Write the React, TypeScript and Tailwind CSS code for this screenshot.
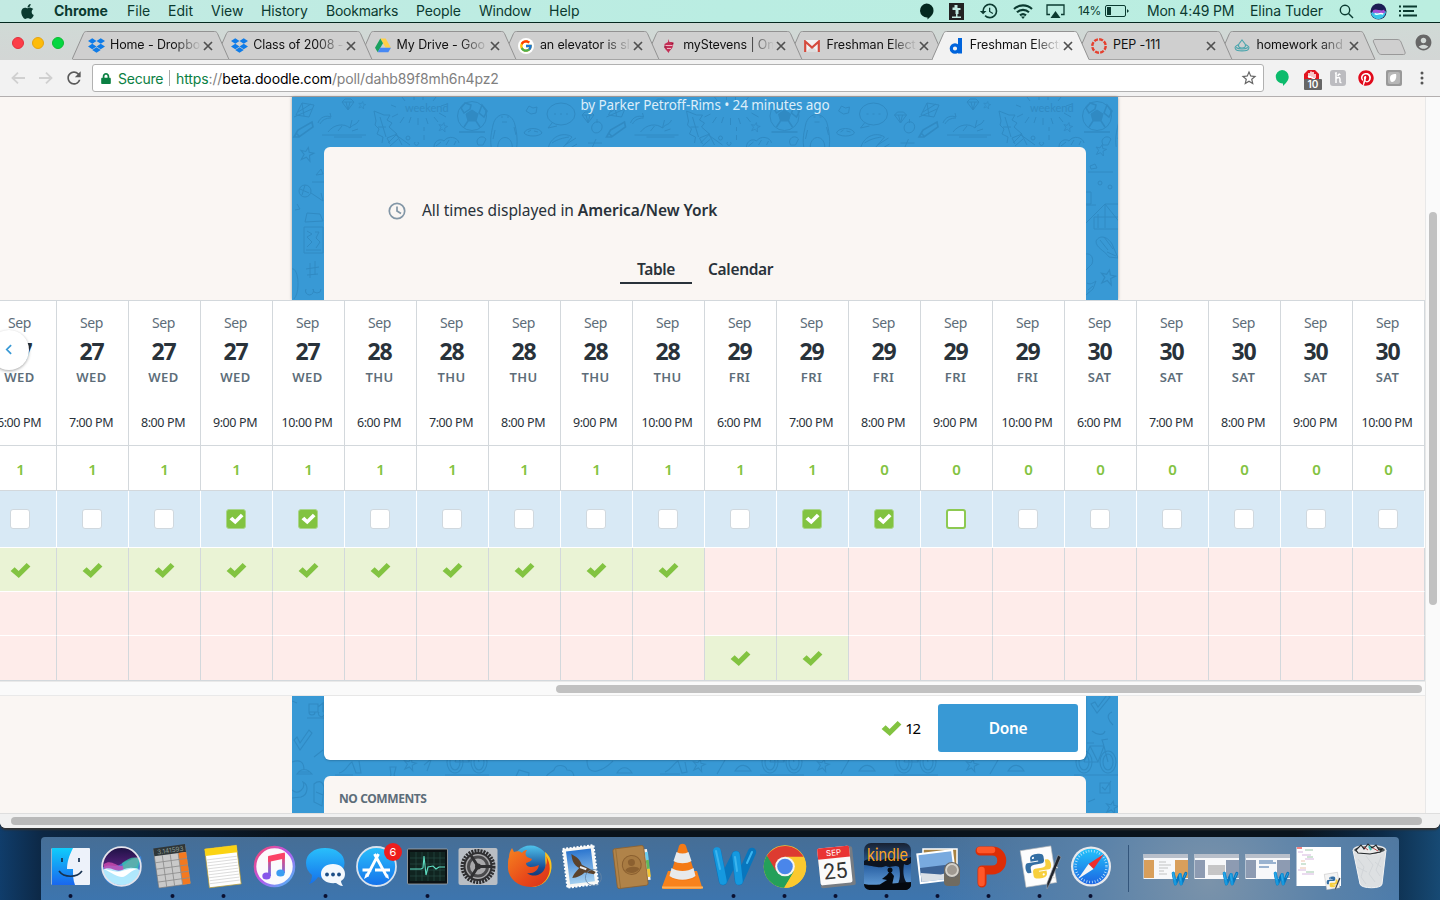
import React from "react";
import { FaApple, FaDropbox, FaPinterest, FaLock } from "react-icons/fa";
import { FcGoogle } from "react-icons/fc";
import { MdAccountCircle, MdRefresh, MdStarBorder, MdHistory } from "react-icons/md";

const CHECK = "M0.500 9.500 L4.800 5.500 L9 9.600 L17.500 1 L21.500 4.800 L9.200 17 Z";

function Check({ className }: { className: string }) {
  return (
    <svg viewBox="0 0 22 18" className={className}>
      <path d={CHECK} fill="currentColor" />
    </svg>
  );
}

/* ---------- macOS menu bar ---------- */

function MenuBar() {
  return (
    <div className="flex h-[23px] shrink-0 items-center border-b border-[#04281f] bg-gradient-to-r from-[#c3eae2] via-[#baede2] to-[#bbeee0] text-[14px] leading-[22px] whitespace-nowrap text-[#0b3a30]">
      <FaApple className="ml-5 h-[17px] w-[15px] shrink-0" />
      <span className="ml-[19px] w-[73px] font-bold tracking-[-0.05px]">Chrome</span>
      <span className="w-[41px]">File</span>
      <span className="w-[43px]">Edit</span>
      <span className="w-[50px]">View</span>
      <span className="w-[65px] tracking-[-0.1px]">History</span>
      <span className="w-[90px] tracking-[-0.25px]">Bookmarks</span>
      <span className="w-[63px] tracking-[-0.15px]">People</span>
      <span className="w-[70px] tracking-[-0.25px]">Window</span>
      <span>Help</span>
      <div className="ml-auto flex h-full items-center">
        <svg viewBox="0 0 15 17" className="h-[17px] w-[15px]">
          <path d="M7.500 .5a7 7 0 0 1 7 7c0 4-3 6.500-6 9v-2a7 7 0 1 1-1-14z" fill="#04281f" />
        </svg>
        <svg viewBox="0 0 15 17" className="ml-[15px] h-[17px] w-[15px]">
          <rect width="15" height="17" fill="#222" />
          <path d="M5.500 2h3v3h3v2h-2v4h-3V7h-3V4.500h2z M3 13.500h9V15H3z M7 10h1.500v4H7z" fill="#c3eae2" />
        </svg>
        <MdHistory className="ml-[15px] h-[20px] w-[20px]" />
        <svg viewBox="0 0 20 15" className="ml-[14px] h-[15px] w-[20px]" fill="none" stroke="currentColor" strokeWidth="2.100">
          <path d="M1 5a13 13 0 0 1 18 0M4 8.300a8.700 8.700 0 0 1 12 0M7 11.400a4.500 4.500 0 0 1 6 0" />
          <path d="M8 12.500h4L10 15z" fill="currentColor" stroke="none" />
        </svg>
        <svg viewBox="0 0 19 15" className="ml-[13px] h-[15px] w-[19px]">
          <path d="M4 10.500H1V1h17v9.500h-3" fill="none" stroke="currentColor" strokeWidth="1.300" />
          <path d="M9.500 7l5 7h-10z" fill="currentColor" />
        </svg>
        <span className="ml-[13px] w-[27px] text-[12px] tracking-[-0.6px]">14%</span>
        <svg viewBox="0 0 24 12" className="h-3 w-6">
          <rect x="0.500" y="0.500" width="20" height="11" rx="1.500" fill="none" stroke="currentColor" />
          <rect x="2" y="2" width="4" height="8" fill="currentColor" />
          <path d="M22 4v4l1.500-1.500v-1z" fill="currentColor" />
        </svg>
        <span className="ml-[18px] w-[103px] tracking-[-0.22px]">Mon 4:49 PM</span>
        <span className="w-[89px] tracking-[-0.05px]">Elina Tuder</span>
        <svg viewBox="0 0 15 15" className="h-[15px] w-[15px]" fill="none" stroke="currentColor" strokeWidth="1.400">
          <circle cx="6" cy="6" r="4.700" />
          <path d="M9.500 9.500L14 14" />
        </svg>
        <svg viewBox="0 0 18 18" className="ml-4 h-[17px] w-[17px]">
          <circle cx="9" cy="9" r="8.500" fill="#1c1d55" />
          <path d="M1 11c4-5 8-3 16-2-1 5-4 8-8 8s-7-3-8-6z" fill="#36c7e8" />
          <path d="M3 8c4-3 8 2 12-1l1 3c-4 3-8-1-13 1z" fill="#a64fd6" />
          <path d="M5 11c3 3 6-2 9 1" stroke="#fff" strokeWidth="1.500" fill="none" />
        </svg>
        <svg viewBox="0 0 18 12" className="mr-[23px] ml-3 h-3 w-[18px]" stroke="currentColor" strokeWidth="2">
          <path d="M0 1.500h2M4 1.500h14M0 6h2M4 6h11M0 10.500h2M4 10.500h14" />
        </svg>
      </div>
    </div>
  );
}

/* ---------- browser chrome ---------- */

const DriveIcon = (
  <svg viewBox="0 0 16 15" className="h-[15px] w-4">
    <path d="M5.300 0.500h5.400L16 9.700h-5.400z" fill="#ffcf48" />
    <path d="M5.300 0.500L8 5.200 2.700 14.300 0 9.700z" fill="#1aa15f" />
    <path d="M5.300 9.700H16l-2.700 4.600H2.700z" fill="#4688f4" />
  </svg>
);
const GoogleIcon = (
  <span className="flex h-4 w-4 items-center justify-center rounded-full bg-white">
    <FcGoogle className="h-[14px] w-[14px]" />
  </span>
);
const StevensIcon = (
  <svg viewBox="0 0 16 16" className="h-4 w-4">
    <path d="M7 1l1.500 3h3l1 1.500-1 4c-1 2-3 3-4 5.500C6 12 3.500 11.500 3.500 9V6L7 4z" fill="#c32f56" />
    <path d="M4.500 7.500h7M6 10.500h4" stroke="#efb5c3" />
    <path d="M3 9h2.500M12.500 5l-2 1" stroke="#8f1638" />
  </svg>
);
const GmailIcon = (
  <svg viewBox="0 0 16 12" className="h-3 w-4">
    <rect x="0.500" width="15" height="12" rx="1" fill="#f2f2f2" />
    <path d="M2 12l6-6 6 6z" fill="#ddd" />
    <path d="M1.200 12V1.500L8 7.500l6.800-6V12" fill="none" stroke="#d54b3d" strokeWidth="2.200" />
  </svg>
);
const DoodleIcon = (
  <svg viewBox="0 0 16 16" className="h-4 w-4">
    <circle cx="7" cy="10.500" r="3.700" fill="none" stroke="#0064dc" strokeWidth="3.200" />
    <path d="M10 0H14V15.500H10z" fill="#0064dc" />
  </svg>
);
const CanvasIcon = (
  <svg viewBox="0 0 16 16" className="h-4 w-4">
    <circle cx="8" cy="8" r="6.700" fill="none" stroke="#e5402f" strokeWidth="2.400" strokeDasharray="4 1.260" />
  </svg>
);
const ChurchIcon = (
  <svg viewBox="0 0 16 14" className="h-[14px] w-4" fill="none" stroke="#4aa5ad" strokeWidth="1.100">
    <path d="M8 .5c.5 2.500 3.500 3 3.500 6C11.500 8.500 10 9 8 9s-3.500-.5-3.500-2.500c0-3 3-3.500 3.500-6z" />
    <path d="M4.500 5.500C1 7.500 .5 8 1.500 10c1 2.500 12 2.500 13 0 1-2 .5-2.500-3-4.500" />
    <path d="M2 8.500c3 2 9 2 12 0" />
  </svg>
);
const DropIcon = <FaDropbox className="h-[17px] w-[17px] text-[#0f7ce8]" />;

const TABS = [
  { title: "Home - Dropbo", icon: DropIcon },
  { title: "Class of 2008 -", icon: DropIcon },
  { title: "My Drive - Goo", icon: DriveIcon },
  { title: "an elevator is sl", icon: GoogleIcon },
  { title: "myStevens | On", icon: StevensIcon },
  { title: "Freshman Electi", icon: GmailIcon },
  { title: "Freshman Electi", icon: DoodleIcon, active: true },
  { title: "PEP -111", icon: CanvasIcon },
  { title: "homework and e", icon: ChurchIcon },
];
const LAYERS = ["z-[9]", "z-[8]", "z-[7]", "z-[6]", "z-[5]", "z-[4]", "z-[20]", "z-[2]", "z-[1]"];

function TabStrip() {
  return (
    <div className="flex h-[37px] shrink-0 items-end bg-gradient-to-b from-[#d0dad6] to-[#d3d6d5]">
      <div className="mb-[11px] ml-[12px] flex w-[60px] shrink-0 gap-2">
        <i className="h-3 w-3 rounded-full border border-[#e22f3c] bg-[#fc3d48]" />
        <i className="h-3 w-3 rounded-full border border-[#e5a411] bg-[#fdbc0a]" />
        <i className="h-3 w-3 rounded-full border border-[#0dbb31] bg-[#04d741]" />
      </div>
      {TABS.map((t, i) => (
        <div key={i} className={"relative flex h-[29px] w-[143.3px] shrink-0 items-center " + LAYERS[i]}>
          <svg viewBox="0 0 158 29" className="absolute top-0 left-0 h-[29px] w-[158px]">
            <path
              d="M0 28.500L11.500 2.500C12.300 1 13 .5 14.500 .5H142.500C144 .5 144.700 1 145.500 2.500L157 28.500"
              fill={t.active ? "#f2f2f2" : "#cfcfcf"}
              stroke="#929292"
            />
            <path d="M1 28.500H156.500" stroke={t.active ? "#f2f2f2" : "#a5a5a5"} />
          </svg>
          <span className="relative ml-4 flex w-[18px] items-center">{t.icon}</span>
          <span
            className={
              "relative ml-1 w-[90px] text-[12.5px] tracking-[-0.12px] whitespace-nowrap text-[#111] " +
              (t.title.length > 8 ? "[mask-image:linear-gradient(to_right,black_70%,transparent_102%)]" : "")
            }
          >
            {t.title}
          </span>
          <svg viewBox="0 0 10 10" className="relative ml-[3px] h-[10px] w-[10px] shrink-0" stroke="#505050" strokeWidth="1.700">
            <path d="M1 1l8 8M9 1l-8 8" />
          </svg>
        </div>
      ))}
      <svg viewBox="0 0 34 18" className="mb-[4px] ml-[10px] h-[18px] w-[34px] shrink-0">
        <path d="M3 1.500h22c2 0 3 .5 4 2.500l4 10c.5 1.500 0 2.500-1.500 2.500H10c-2 0-3-.5-4-2.500L1.500 4C1 2.500 1.500 1.500 3 1.500z" fill="#cfcfcf" stroke="#999" />
      </svg>
      <MdAccountCircle className="mb-[8px] ml-[8px] h-[19px] w-[19px] shrink-0 text-[#676767]" />
    </div>
  );
}

function Toolbar() {
  return (
    <div className="flex h-[37px] shrink-0 items-center border-b border-[#b3afaf] bg-[#f2f2f2] text-[14px]">
      <svg viewBox="0 0 14 12" className="ml-[11px] h-3 w-[14px]" fill="none" stroke="#d0d0d0" strokeWidth="1.800">
        <path d="M14 6H1.500M7 .7L1.500 6 7 11.300" />
      </svg>
      <svg viewBox="0 0 14 12" className="ml-[14px] h-3 w-[14px]" fill="none" stroke="#d0d0d0" strokeWidth="1.800">
        <path d="M0 6h12.500M7 .7L12.500 6 7 11.300" />
      </svg>
      <MdRefresh className="ml-[11px] h-5 w-5 text-[#5a5a5a]" />
      <div className="ml-2 flex h-[28px] w-[1172px] items-center rounded-[3px] border border-[#b1b1b1] bg-white whitespace-nowrap">
        <FaLock className="ml-2 h-[11px] w-[10px] text-[#0b8043]" />
        <span className="ml-[7px] w-[51px] tracking-[-0.25px] text-[#0b8043]">Secure</span>
        <i className="h-4 w-px bg-[#a9a9a9]" />
        <span className="ml-[6px] tracking-[-0.12px] text-[#808080]">
          <span className="text-[#0b8043]">https</span>://<span className="text-black">beta.doodle.com</span>/poll/dahb89f8mh6n4pz2
        </span>
        <MdStarBorder className="mr-[5px] ml-auto h-[18px] w-[18px] text-[#666]" />
      </div>
      <svg viewBox="0 0 14 16" className="ml-[11px] h-4 w-[14px]">
        <path d="M7 0a6.700 6.700 0 0 1 6.700 6.700c0 4-3 6.500-5.700 9.300v-2.600A6.700 6.700 0 1 1 7 0z" fill="#0cbb6c" />
      </svg>
      <div className="relative ml-[13px] h-5 w-5">
        <svg viewBox="0 0 20 20" className="h-5 w-5">
          <path d="M6 2h7l4 4v8H2V6z" fill="#e2151f" />
          <path d="M7 10V5M9 10V3.500M11 10V4M13 10V6M6 8l7 3" stroke="#fff" strokeWidth="1.500" />
        </svg>
        <span className="absolute top-[11px] left-[2px] flex h-[11px] w-[18px] items-center justify-center rounded-[1px] bg-[#666] text-[10px] font-semibold text-white">10</span>
      </div>
      <span className="ml-2 flex h-4 w-4 items-center justify-center rounded-[3px] bg-[#bcbcc0]">
        <svg viewBox="0 0 12 12" className="h-3 w-3" fill="none" stroke="#fff" strokeWidth="1.500">
          <path d="M3 1.500l1-.5v10M4 6.500c3-2 4-1 4 1 0 2-.5 3.500 1.500 3M8 3c0-1.500-2-1-2 1" />
        </svg>
      </span>
      <span className="ml-3 flex h-4 w-4 items-center justify-center rounded-full bg-white">
        <FaPinterest className="h-4 w-4 text-[#e00b1c]" />
      </span>
      <svg viewBox="0 0 16 16" className="ml-3 h-4 w-4">
        <rect width="16" height="16" rx="2" fill="#999" />
        <rect x="2" y="2" width="12" height="12" rx="2" fill="#b7b7b7" />
        <path d="M4 8c0-3 2-4 6-4 1 4-1 8-4 8-1 0-2-1-2-4z" fill="#fff" />
      </svg>
      <svg viewBox="0 0 4 14" className="ml-[18px] h-[14px] w-1" fill="#555">
        <circle cx="2" cy="2" r="1.500" /><circle cx="2" cy="7" r="1.500" /><circle cx="2" cy="12" r="1.500" />
      </svg>
    </div>
  );
}

/* ---------- doodle artwork on the blue backdrop ---------- */

function Star({ x, y, s = 1 }: { x: number; y: number; s?: number }) {
  return <path transform={`translate(${x} ${y}) rotate(12) scale(${s})`} d="M0-6l1.600 4H6L2.500.8 4 6 0 3-4 6l1.500-5.200L-6-2h4.400z" />;
}
function Bike({ x, y }: { x: number; y: number }) {
  return (
    <g transform={`translate(${x} ${y})`}>
      <ellipse cx="-12" cy="0" rx="8" ry="11" /><ellipse cx="-12" cy="0" rx="5" ry="8" />
      <ellipse cx="12" cy="0" rx="8" ry="11" /><ellipse cx="12" cy="0" rx="5" ry="8" />
      <path d="M-12 0l6-16H8l4 16M-6-16L2 0 8-16M-12 0H2M-9-19h7M8-16l-2-6 6-1M-22 13h44" />
    </g>
  );
}
function TopTile({ label }: { label: boolean }) {
  return (
    <g>
      <path d="M4 18l6-12 12 2-5 12zM10 6l2 13M6 15l13-8M2 20l18-8" />
      <path d="M26 26c2-6 8-8 13-6l-1-4M28 27c2-4 6-6 11-6" />
      <path d="M50 5l3-3h6l3 3-6 8zM50 5h12M54 5l2 8 2-8" />
      <Star x={70} y={8} s={0.6} />
      <path d="M2 40l4-7 14-8 1 5-14 10zM4 36l3 3" strokeWidth="1.600" />
      <path d="M30 38h44M36 35c6-8 16-9 22-4 4-5 6-2 9-8M46 34l4-5M58 31l2-8M42 40h28M60 34l6-2" />
      <path d="M82 14l10 4 6 0-3 5 5 3-3 4 8 7-10 4 3 6M82 14l2 10-1 4 4 4-2 5 6 3-1 6M88 20l6 20M86 30l8 0M96 46l8-8 14 10M98 49l8-7M104 36l6 12" />
      {label && <text x="113" y="15" fontSize="11" fill="#308ac3" stroke="none" className="font-[Lato]">weekend</text>}
      <path d="M104 10l-5-2M106 17l-6 3M112 20l-4 6M119 20l-2 6M126 21v7M134 21l2 6M142 20l4 5M147 16l7 4M149 9l6-2M113 4l-3-4M122 3V0M131 3V0M141 4l3-4" />
      <path d="M132 30v4M132 38v5M114 41a2 2 0 1 0 4 0 2 2 0 0 0-4 0M123 45a2 2 0 1 0 3 0" />
      <Star x={151} y={30} s={0.75} />
      <circle cx="180" cy="19" r="14.500" />
      <path d="M180 13l6 4-2 7h-8l-2-7z" fill="#308ac3" />
      <path d="M169 11l4-5 6 2-1 4-6 4zM190 8l5 6-3 6-5-4zM176 24l-4 6M184 24l4 6M167 35h26" strokeWidth="1.500" />
      <path d="M142 50c0-6 6-9 10-6 4-6 14-4 15 2M144 49l5-4M154 48l3-5M162 48l2-4" />
      <path d="M185 45c0-5 6-7 9-3l-3 6h-5z" />
      <path d="M200 54c-3-12 0-20 1-26 3-14 19-14 22 0 2 8 3 18 1 26M206 54c-3-18 17-18 14 0M209 20h2M215 20h2M210 25h5M203 33l-2 9M222 30l2 8" />
      <path d="M234 14l3-5 4 2 4-1-1 6-5 1z" /><path d="M232 36c2-6 16-6 18 0-3 4-15 4-18 0zM236 35l3-2M242 34l4 1" />
      <ellipse cx="269" cy="17" rx="14" ry="11" /><path d="M260 26l-4 5 9-2M262 17h2M268 17h2M274 17h2" />
      <path d="M256 52c2-12 15-18 24-12l-12 14M260 46c6-4 11-5 17-6M273 48l11-7M275 53l10-6" />
      <path d="M290 18l3-3h6l3 3-6 8zM290 18h12M294 18l2 8 2-8" />
      <path d="M302 26c4-3 9 0 8 5s-8 7-10 2c-1-3 0-5 2-7zM305 26v-4" />
      <path d="M296 46h14M300 51l4-9" />
    </g>
  );
}
function TopDoodles() {
  return (
    <svg viewBox="0 0 826 203" className="absolute inset-0 h-full w-full" fill="none" stroke="#308ac3" strokeWidth="1">
      {[0, 312.5, 625].map((x) => <g key={x} transform={`translate(${x} 0)`}><TopTile label={x !== 312.5} /></g>)}
      <rect x="0" y="50" width="826" height="153" fill="#3899d5" stroke="none" />
      <Star x={15} y={57} s={1.1} /><path d="M24 78l5-6 2 5zM20 85h12" />
      <circle cx="13" cy="94" r="6" /><path d="M8 92l9 4M13 88l-3 10M19 96l12 8-2-8M5 107l3 5-5 1" />
      <path d="M13 125l2-9 13 1 3 7zM12 130h19v26H12zM15 134l5 3-5 3 5 5-5 5M23 135h4l-3 6 4 4-4 6M14 153h15" />
      <path d="M18 166v15M23 164v14M14 172l13-2M15 178l11-1M14 192a4 4 0 1 0 7 0 4 4 0 1 0 8 0M0 172c6-2 9 22 2 30" />
      <Star x={809} y={53} s={0.9} /><path d="M796 75h25M798 69l5-2 2 4-6 1zM794 95h5v12h-5M794 108h10" />
      <circle cx="808" cy="86" r="2" /><circle cx="818" cy="90" r="2" />
      <path d="M794 126l19-19 16 20M802 120h24M802 132h24M802 120v12M813 107v24M806 117v14M813 107h13" />
      <path d="M804 144c4-7 12-4 16 3l6 14-9-1c-5-7-13-9-13-16zM808 143l8 10M812 140l9 12M815 155l9 4M794 157c5-1 8 4 6 10l-6 6" />
      <Star x={816} y={180} s={1.2} /><path d="M795 186c3 2 6 0 9-2l-3 8-7 6M796 193l5-4" />
    </svg>
  );
}
function BottomDoodles() {
  return (
    <svg viewBox="0 0 826 117" className="absolute inset-0 h-full w-full" fill="none" stroke="#308ac3" strokeWidth="1.100">
      <path d="M17 8h9v8h-9zM26 11l5-4v9M17 16a3 3 0 1 0 6 0M27 16a3 3 0 1 0 5 0M15 22h20M0 5l5 2" />
      <path d="M2 44l6 10 12-17-3-3-9 13-3-6z" /><path d="M0 66c8-3 12 0 12 8M6 76h12M5 78c4-6 10-6 15 0zM22 61l9-7" />
      <path d="M0 94c6 6 14-2 11-8 6 3 5 13-2 15l-9 1M22 88c5-4 9-3 10 4l-2 18-8-4zM24 96l7 3" />
      <path d="M47 77c7-1 9-9 13-11l4 11h5l-2-12M43 79h18M72 92v-9h12v9M98 71h6l-2 8 4 5H96l3-5z" />
      <Star x={118} y={68} /><path d="M135 75l4-11M138 64l-6 5" />
      <Bike x={175} y={66} />
      <path d="M220 89l7-15 10 3-2 12M256 87c-6-7 2-10 6-13 2-7 12-5 13 0 8 0 8 8 5 14M262 84h13M295 64c0 20 18 9 26 1M325 77c4-7 11-7 15 0z" />
      <path d="M373 76c6-2 9-9 13-11l4 12 5-1-2-10M368 78h20" />
      {[407, 531, 680].map((x) => <g key={x}><Star x={x} y={69} /><path d={`M${x + 18} 78l8-14M${x + 36} 75c5-8 12-7 16 0z`} /></g>)}
      <Bike x={490} y={66} /><Bike x={624} y={66} /><Bike x={804} y={66} />
      <path d="M799 8l6 9L818 1l-3-2-9 12-3-5zM800 35c6 5 12 4 13 0M820 16c-7 3-3 9 1 13" />
      <path d="M808 87h10v10h-10zM810 91l3 3 6-9" /><Star x={820} y={111} /><path d="M796 106l7-3" />
    </svg>
  );
}

/* ---------- poll ---------- */

type Col = { day: string; wd: string; time: string; count: number; box: "on" | "off" | "hover"; yes1: boolean; yes3: boolean };
const TIMES = ["6:00 PM", "7:00 PM", "8:00 PM", "9:00 PM", "10:00 PM"];
const DAYS = [["27", "WED"], ["28", "THU"], ["29", "FRI"], ["30", "SAT"]];
const COLS: Col[] = DAYS.flatMap(([day, wd], d) =>
  TIMES.map((time, t) => {
    const i = d * 5 + t;
    return {
      day, wd, time,
      count: i < 12 ? 1 : 0,
      box: [3, 4, 11, 12].includes(i) ? "on" : i === 13 ? "hover" : "off",
      yes1: i < 10,
      yes3: i === 10 || i === 11,
    } as Col;
  }),
);

function Answer({ yes, last }: { yes: boolean; last?: boolean }) {
  return (
    <div className={"flex justify-center border-r border-b border-r-[#d3d8dc] pr-px text-[#82c341] " + (last ? "h-[45px] border-b-[#d3d8dc] " : "h-[44px] border-b-white ") + (yes ? "bg-[#eaf3d5]" : "bg-[#feecea]")}>
      {yes && <Check className="mt-[14px] h-[17px] w-[21px]" />}
    </div>
  );
}

function PollTable() {
  return (
    <div className="relative h-[396px] shrink-0 overflow-hidden border-t border-[#d3d8dc] bg-white">
      <div className="-ml-[15px] flex w-[1440px]">
        {COLS.map((c, i) => (
          <div key={i} className="flex w-[72px] shrink-0 flex-col">
            <div className="flex h-[145px] flex-col items-center border-r border-b border-[#d3d8dc] pr-[2px] whitespace-nowrap text-[#29323a]">
              <span className="mt-3 h-5 text-[14px] leading-5 tracking-[-0.4px] text-[#5d6d79]">Sep</span>
              <span className="mt-1 h-7 text-[23px] leading-7 font-bold tracking-[-1.1px]">{c.day}</span>
              <span className="mt-[2px] h-5 text-[13px] leading-5 font-semibold tracking-[0.4px] text-[#5d6d79]">{c.wd}</span>
              <span className="mt-[25px] h-5 pr-px pt-px text-[12.5px] leading-5 tracking-[-0.4px]">{c.time}</span>
            </div>
            <div className="flex h-[45px] items-center justify-center border-r border-b border-[#d3d8dc] pt-[3px] text-[15px] font-semibold text-[#82c341]">{c.count}</div>
            <div className="flex h-[57px] items-center justify-center border-r border-b border-white bg-[#d8e9f5] pr-px">
              {c.box === "on" ? (
                <span className="flex h-5 w-5 items-center justify-center rounded-[3px] border border-[#a9d58a] bg-[#82c341] text-white"><Check className="h-[12px] w-[15px]" /></span>
              ) : c.box === "hover" ? (
                <span className="h-5 w-5 rounded-[3px] border-2 border-[#8dc951] bg-white" />
              ) : (
                <span className="h-5 w-5 rounded-[3px] border border-[#d0d8de] bg-white" />
              )}
            </div>
            <Answer yes={c.yes1} />
            <Answer yes={false} />
            <Answer yes={c.yes3} last />
          </div>
        ))}
      </div>
      <div className="flex h-[15px] items-center justify-end border-t border-b border-[#e9e9e9] bg-[#fafafa] pr-[3px]">
        <i className="h-2 w-[866px] rounded-full bg-[#c1c1c1]" />
      </div>
      <div className="absolute top-[29px] left-[-11px] flex h-10 w-10 items-center justify-center rounded-full bg-white pr-[2px] pb-[2px] shadow-[0_1px_3px_rgba(0,0,0,0.35)]">
        <svg viewBox="0 0 8 12" className="h-[11px] w-[7px]" fill="none" stroke="#3899d5" strokeWidth="2">
          <path d="M7 1L2 6l5 5" />
        </svg>
      </div>
    </div>
  );
}

function Page() {
  return (
    <div className="flex h-[716px] w-[1425px] flex-col bg-[#faf6f3] font-['Noto_Sans','Open_Sans',sans-serif]">
      <div className="relative ml-[292px] flex h-[203px] w-[826px] shrink-0 flex-col bg-[#3899d5] shadow-[0_0_3px_rgba(0,0,0,0.35)]">
        <TopDoodles />
        <div className="relative -mt-[2px] h-[21px] text-center text-[13.5px] leading-[20px] tracking-[-0.09px] text-[#dceefa]">by Parker Petroff-Rims • 24 minutes ago</div>
        <div className="relative mx-8 mt-[31px] flex grow flex-col rounded-t-[6px] bg-[#faf6f3] text-[#29323a]">
          <div className="mt-[53px] ml-16 flex h-[22px] items-center text-[15.5px] tracking-[-0.06px] whitespace-nowrap">
            <svg viewBox="0 0 18 18" className="mr-[16px] h-[18px] w-[18px]" fill="none" stroke="#8296a6" strokeWidth="1.700">
              <circle cx="9" cy="9" r="7.700" />
              <path d="M9 4.500V9l4 2.500" />
            </svg>
            <span>All times displayed in <span className="font-semibold">America/New York</span></span>
          </div>
          <div className="mt-[32px] ml-[296px] flex h-[30px] items-start text-[15.5px] leading-[31px] font-semibold tracking-[-0.32px]">
            <span className="h-[30px] w-[72px] border-b-2 border-[#29323a] text-center">Table</span>
            <span className="ml-4">Calendar</span>
          </div>
        </div>
      </div>
      <div className="relative shrink-0"><PollTable /></div>
      <div className="relative ml-[292px] flex h-[117px] w-[826px] flex-col bg-[#3899d5]">
        <BottomDoodles />
        <div className="relative mx-8 flex h-16 items-center justify-end rounded-b-[6px] bg-white pr-2 shadow-[0_1px_2px_rgba(0,0,0,0.2)]">
          <Check className="mr-[3px] h-[17px] w-[21px] text-[#82c341]" />
          <span className="mr-[18px] text-[15px] leading-5 tracking-[-1.2px] text-black">12</span>
          <button className="h-12 w-[140px] rounded-[3px] bg-[#3899d5] pt-[2px] text-[15.5px] font-semibold tracking-[-0.3px] text-white">Done</button>
        </div>
        <div className="relative mx-8 mt-4 grow rounded-t-[6px] bg-[#faf6f3] pt-[13px] pl-[15px] text-[12px] leading-5 font-bold tracking-[-0.4px] text-[#5d6d79]">NO COMMENTS</div>
      </div>
    </div>
  );
}

/* ---------- dock ---------- */

function WordMark() {
  return (
    <g fill="none" strokeLinecap="round" strokeLinejoin="round">
      <path d="M9 15l6 29L28 18l3 26L44 15" stroke="#0876bd" strokeWidth="8.500" />
      <path d="M9 14l6 30M28 18l3 26" stroke="#1599df" strokeWidth="7.500" />
      <path d="M8 14l4 18M27 20l2 14M44 15l-5 11" stroke="#3cb4ee" strokeWidth="2" />
    </g>
  );
}
function PythonMark() {
  return (
    <g>
      <path d="M25 15c-6 0-8 2-8 5v3h9v1H13c-4 0-4 12 0 12h3v-5c0-3 2-4 5-4h8c3 0 4-2 4-4v-4c0-3-3-4-8-4z" fill="#346fa4" />
      <path d="M26 44c6 0 8-2 8-5v-3h-9v-1h12c5 0 4-12 0-12h-3v5c0 3-2 4-5 4h-8c-2 0-3 2-3 4v4c0 3 3 4 8 4z" fill="#f7cf3d" />
      <circle cx="20.500" cy="19" r="1.300" fill="#fff" /><circle cx="30" cy="40" r="1.300" fill="#fff" />
    </g>
  );
}
const Pen = <g><path d="M47 20l-11 26-3 6v-6l11-28z" fill="#20242c" stroke="#9ba2ad" strokeWidth=".6" /><path d="M42 30l2 1M38 40l3 1" stroke="#ddd" /></g>;

const DOCK: { dot?: boolean; art: React.ReactNode }[] = [
  { dot: true, art: <g>
    <rect x="6.500" y="11" width="38.500" height="37" rx="1" fill="#edf2fa" />
    <path d="M7 11h21c-4 8-6 14-6 21h6c0 6 0 11 2 16H7z" fill="url(#finder)" />
    <path d="M17 21v4M34 21v4" stroke="#173250" strokeWidth="1.700" /><path d="M14 34c5 7 18 7 23 0" fill="none" stroke="#173250" strokeWidth="1.600" /></g> },
  { art: <g>
    <circle cx="25.500" cy="29.500" r="19.500" fill="url(#siri)" />
    <path d="M6 31c9-6 12 1 19-4s13-3 20-8c2 12-3 30-19 30S7 41 6 31z" fill="#3a8ff0" opacity=".75" />
    <path d="M8 27c8-6 14 5 20 1s9-9 15-7l-2 8c-9 6-22 5-33 3z" fill="#d84fb4" opacity=".75" />
    <path d="M26 26c7-5 12-7 18-4l-2 10-14 2z" fill="#35d3a8" opacity=".7" />
    <path d="M6 33c9-5 13 3 20 0s11-3 18 0c-2 9-9 15-18 15S8 42 6 33z" fill="#bdf3ff" opacity=".9" />
    <path d="M8 32c8 1 10 4 18 2s10-3 17-2c-8 0-12 8-17 8S16 36 8 32z" fill="#fff" />
    <circle cx="25.500" cy="29.500" r="19.300" fill="none" stroke="#e4e4ec" strokeWidth="1.800" /></g> },
  { dot: true, art: <g transform="rotate(-8 25 30)">
    <rect x="9" y="10" width="32" height="39" rx="1" fill="#c9c9c9" stroke="#777" strokeWidth=".6" /><rect x="9" y="9" width="32" height="8" fill="#2f3638" />
    <text x="39" y="15.500" fontSize="6.500" fill="#8c9c95" textAnchor="end">3.141593</text><rect x="33" y="17" width="8" height="32" fill="#f4791f" />
    <path d="M17 17v32M25 17v32M33 17v32M9 23.500h32M9 30h32M9 36.500h32M9 43h32" stroke="#8d8d8d" strokeWidth=".8" /></g> },
  { dot: true, art: <g transform="rotate(-7 25 30)">
    <rect x="9" y="10" width="32" height="39" fill="#fff" stroke="#b89a2e" strokeWidth=".7" /><rect x="9" y="10" width="32" height="7" fill="#fbd313" />
    <path d="M10 21h30M10 24h30M10 27h30M10 30h30M10 33h30M10 36h30M10 39h30M10 42h30M10 45h30" stroke="#d5d5d5" strokeWidth=".8" /></g> },
  { art: <g>
    <circle cx="25.500" cy="29.500" r="19.500" fill="#fbfafc" stroke="url(#itunes)" strokeWidth="2.600" />
    <path d="M20.500 39V21l14-3v18" fill="none" stroke="url(#note)" strokeWidth="2.800" /><path d="M19.200 19l16.500-3.500v6l-16.500 3.500z" fill="#fb4267" />
    <ellipse cx="17.500" cy="39" rx="4.200" ry="3.500" fill="#8757ea" /><ellipse cx="31.500" cy="36" rx="4.200" ry="3.500" fill="#3b9df2" /></g> },
  { dot: true, art: <g>
    <path d="M25 11c11 0 19.500 6 19.500 15s-8.500 15-19.500 15c-3 0-5 0-7-1-2 3-5 6-9 7 2-2 3-6 3-9-4-3-6-7-6-12 0-9 8-15 19-15z" fill="url(#msg)" />
    <path d="M33 27c7 0 12 4 12 10 0 3-1 5-4 7 0 2 1 3 2 5-3 0-5-2-7-3-9 1-15-3-15-9s5-10 12-10z" fill="#f3f8fd" />
    <g fill="#1c4e86"><circle cx="27" cy="37.500" r="1.900" /><circle cx="33" cy="37.500" r="1.900" /><circle cx="39" cy="37.500" r="1.900" /></g></g> },
  { art: <g>
    <circle cx="25.500" cy="29.500" r="19.500" fill="url(#msg)" stroke="#d8e2ee" strokeWidth="1.800" />
    <path d="M27.500 17L16 39M23.500 17l12 22M11.500 33h9M24 33h15" stroke="#fff" strokeWidth="2.800" fill="none" />
    <path d="M15 36l-2 6 5-3M38 42l-4-2 3-3z" fill="#fff" />
    <circle cx="42" cy="15" r="9" fill="#ee1d1d" /><text x="42" y="19" fontSize="11" fill="#fff" textAnchor="middle">6</text></g> },
  { dot: true, art: <g>
    <rect x="5.500" y="12" width="40" height="35" rx="1" fill="#0b1113" stroke="#aaa" strokeWidth=".8" /><rect x="8" y="15" width="35" height="29" fill="#102420" />
    <path d="M14 15v29M20 15v29M26 15v29M32 15v29M38 15v29M8 21h35M8 27h35M8 33h35M8 39h35" stroke="#28504a" strokeWidth=".6" />
    <path d="M8 32h11l2-1 1-12 2 19 2-8 5-1 3 3 3-2h6" fill="none" stroke="#5fe0c4" strokeWidth="1.100" /></g> },
  { art: <g>
    <rect x="5.500" y="11" width="39" height="37" rx="2" fill="#b9bec4" /><circle cx="25" cy="29.500" r="15.500" fill="none" stroke="#2d2d2f" strokeWidth="4" strokeDasharray="2 1" />
    <circle cx="25" cy="29.500" r="13.500" fill="#a8a8aa" stroke="#303032" strokeWidth="2" /><circle cx="25" cy="29.500" r="9.500" fill="none" stroke="#4a4a4c" strokeWidth="3" />
    <circle cx="25" cy="29.500" r="3" fill="#333" /><path d="M25 29.500h13M25 29.500l-7-11M25 29.500l-7 11" stroke="#303032" strokeWidth="3" /></g> },
  { art: <g>
    <circle cx="26.500" cy="27" r="18.500" fill="url(#ffblue)" />
    <path d="M41 15c5 4 7 9 6.500 16-1 11-9 19-20 19l8-9c5-4 7-9 6-15-.5-4 0-7-.5-11z" fill="#fcc11a" />
    <path d="M5 20c0-3 1-6 3-9l2 4c3-1 6-1 8 1 2-3 4-3 5-3-2 3-2 5 0 7l5 2c-1 3-4 3-6 4 0 3 3 4 5 4 3 0 5-1 8-2-1 6-6 9-12 8 6 5 14 2 17-3 2-4 4-9 2-14 4 6 5 14 2 20-3 7-9 11-17 11C12 50 3 40 4 28c0-3 0-5 1-8z" fill="url(#fox)" /></g> },
  { art: <g transform="rotate(-7 25 30)">
    <rect x="10" y="10" width="31" height="39" fill="#f7f7f4" stroke="#fff" strokeWidth="2" strokeDasharray="2 1.500" /><rect x="13" y="13" width="25" height="33" fill="url(#sky)" />
    <path d="M18 16c5 4 8 6 9 12l13 9-2 2-9-3c-4 3-8 4-13 4 3-5 5-6 8-9-5-4-6-8-6-15z" fill="#5b422b" /><path d="M25 30l6 3" stroke="#eee" strokeWidth="2" /><circle cx="37" cy="42" r="8" fill="none" stroke="#6484a6" strokeWidth=".8" /></g> },
  { art: <g transform="rotate(-7 25 30)">
    <rect x="38" y="14" width="5" height="31" fill="#f4f4f4" /><path d="M42 17v8" stroke="#6acdef" strokeWidth="3" /><path d="M42 25v9" stroke="#61b958" strokeWidth="3" /><path d="M42 34v8" stroke="#f2c634" strokeWidth="3" />
    <rect x="9" y="10" width="31" height="40" rx="2" fill="#b08349" stroke="#8b6030" strokeWidth=".8" /><path d="M12 10v40" stroke="#96703a" strokeWidth="1" />
    <circle cx="26" cy="28" r="9.500" fill="#a87b42" stroke="#8b6030" /><circle cx="26" cy="25.500" r="3.500" fill="#8b6030" /><path d="M19 33c1-4 13-4 14 0-4 4-10 4-14 0z" fill="#8b6030" /></g> },
  { art: <g>
    <path d="M11 34h29l5 16c0 2-1 2-2 2H7c-1 0-2-1-2-2z" fill="#f8821c" /><path d="M13 40c6 5 20 5 26 0L29 9c-1-3-6-3-7 0z" fill="#f47a16" />
    <path d="M19.500 15l-3 9c5 3 13 3 18 0l-3-9c-4 2-8 2-12 0zM14.500 31l-2 8c7 5 19 5 26 0l-2-8c-6 4-16 4-22 0z" fill="#e8eaec" /><path d="M5 50.500h41" stroke="#ffb056" strokeWidth="2" /></g> },
  { dot: true, art: <WordMark /> },
  { dot: true, art: <g>
    <circle cx="26" cy="29.500" r="21.300" fill="#fbc92f" />
    <path d="M26 29.500L7.600 18.800A21.300 21.300 0 0 0 25 50.800L35 35z" fill="#24a05a" /><path d="M26 20h18.500a21 21 0 0 1-19 30.800L35 34z" fill="#fbc92f" /><path d="M8 18.800a21.300 21.300 0 0 1 36.500 1H26L17 34z" fill="#dd3b31" />
    <circle cx="26" cy="29.500" r="9.800" fill="#f4f4f4" /><circle cx="26" cy="29.500" r="7.800" fill="#4a86ea" /></g> },
  { dot: true, art: <g transform="rotate(-6 25 30)">
    <rect x="9" y="11" width="35" height="39" rx="2" fill="#767c83" /><rect x="9" y="10" width="32" height="37" rx="2" fill="#fafafa" /><path d="M9 12c0-2 1-2 2-2h28c2 0 2 1 2 2v9H9z" fill="#ea3434" />
    <text x="25" y="18.500" fontSize="8" fill="#fff" textAnchor="middle">SEP</text><text x="25" y="41.500" fontSize="22" fill="#333" textAnchor="middle" textLength="24" lengthAdjust="spacingAndGlyphs" className="font-[Roboto]">25</text></g> },
  { dot: true, art: <g>
    <rect x="3" y="6" width="47" height="47" rx="7" fill="url(#kindle)" /><path d="M3 24c8-5 14 2 20-2s12 3 27-2v6c-2 2-5 3-7 1-1 7-1 12 2 18l5 2c0 4-3 6-7 6H25l8-3c6-2 7-12 5-20-5-3-8 2-13-1-7 3-10 0-22-1z" fill="#0c1421" />
    <path d="M3 47c10 2 20 0 47-2v2c0 4-3 6-7 6H10c-4 0-7-2-7-6zM21 42l5-4 3-4 4 5-2 9H18l8-5zM19 38l5 3" fill="#05090f" /><circle cx="29" cy="33" r="2.500" fill="#05090f" />
    <text x="26.500" y="24" fontSize="17" fill="#fca523" textAnchor="middle" textLength="41" lengthAdjust="spacingAndGlyphs">kindle</text></g> },
  { dot: true, art: <g>
    <rect x="11" y="12" width="34" height="28" fill="#a78243" stroke="#fff" strokeWidth="1.500" /><g transform="rotate(-7 25 30)"><rect x="6" y="14" width="37" height="31" fill="#fff" /><rect x="8" y="16" width="33" height="27" fill="#79aadf" /><path d="M8 29h33v8l-33 6z" fill="#3d6396" /><path d="M8 34l20 4 13-2v7H8z" fill="#dbe0e6" /></g>
    <rect x="32" y="29" width="16" height="20" rx="4" fill="#706b60" /><circle cx="40" cy="33" r="7.500" fill="#d4d1c9" stroke="#666" strokeWidth="1.200" /><circle cx="40" cy="33" r="5" fill="#a09a92" /></g> },
  { dot: true, art: <g fill="none" strokeLinecap="round" strokeLinejoin="round">
    <path d="M17 14h12c13 0 13 19 0 19H19v13" stroke="#dc2d06" strokeWidth="9" /><path d="M17 13h12M18.500 33v13" stroke="#ff5729" strokeWidth="6.500" /></g> },
  { dot: true, art: <g><g transform="rotate(-9 25 30)"><rect x="9" y="11" width="31" height="37" fill="#fdfdfd" stroke="#bbb" strokeWidth=".6" /><g transform="translate(3 4) scale(.85)"><PythonMark /></g></g>{Pen}</g> },
  { dot: true, art: <g>
    <circle cx="26" cy="29.500" r="20" fill="#e9e9ec" /><circle cx="26" cy="29.500" r="17.800" fill="url(#safari)" /><circle cx="26" cy="29.500" r="15.500" fill="none" stroke="#bfe3fa" strokeWidth="2.500" strokeDasharray=".8 2" />
    <path d="M39 17L28.500 32 23.500 27z" fill="#ee2c2c" /><path d="M13 42l10.500-15 5 5z" fill="#f5f5f5" /></g> },
];

function Thumb({ side, doc }: { side: string; doc: number }) {
  return (
    <g>
      <rect x="3.500" y="17" width="44.500" height="25" fill="#f7f8fa" /><rect x="3.500" y="17" width="44.500" height="4" fill="#b8bfca" /><rect x="4" y="23" width="10" height="18" fill={side} />
      <rect x="35" y="23" width="13" height="18" fill={side} />
      {doc === 0 && <path d="M19 25h7M19 28h12M19 31h9M19 34h5M19 37h8" stroke="#b4b4b4" strokeWidth=".8" />}
      {doc === 1 && <path d="M17 29h17M17 31h17M17 33h17M17 35h17M17 37h17" stroke="#888" strokeWidth=".9" />}
      {doc === 2 && <path d="M17 24h14M17 26h17M17 30h10" stroke="#3e6fa5" strokeWidth="1.200" />}
      <g transform="translate(30 31) scale(.36)"><WordMark /></g>
    </g>
  );
}

const MINIMIZED: React.ReactNode[] = [
  <Thumb side="#d99f5b" doc={0} />,
  <Thumb side="#8d9bb2" doc={1} />,
  <Thumb side="#8d9bb2" doc={2} />,
  <g>
    <rect x="3.500" y="10" width="44.500" height="39" fill="#fff" />
    <g strokeWidth=".6">
      <path d="M4 11h5" stroke="#e33" strokeWidth="1.200" /><path d="M5 15h5M9 18h9M12 22h9M5 33h8M9 37h12" stroke="#bb87cb" /><path d="M12 13h8M14 20h6M8 27h5M13 35h8" stroke="#5fa574" /><path d="M8 24h4M7 31h6" stroke="#df9c75" />
    </g>
    <g transform="translate(30 34) scale(.37)"><rect x="7" y="6" width="36" height="42" fill="#f4f4f4" stroke="#aaa" transform="rotate(-9 25 30)" /><PythonMark />{Pen}</g>
  </g>,
  <g>
    <path d="M9 13h33l-4 34c0 5-21 5-22 0z" fill="#dde0e2" stroke="#f4f4f4" /><ellipse cx="25.500" cy="13" rx="16" ry="4.500" fill="#4e5558" stroke="#e4e6e8" strokeWidth="1.500" />
    <path d="M12 13l5-5 3 4 4-5 4 4 4-3 3 5 3-1-2 3-10 2-12-1z" fill="#e9e9e9" stroke="#22272a" strokeWidth="1.100" /><path d="M20 10l4 3M29 11l5 3" stroke="#b84848" /><path d="M25 9l2 4" stroke="#3dbdb7" strokeWidth="2" />
    <path d="M14 22l6 8-3 10 5 7M22 19l7 9-4 9 6 8M37 20l-5 13 4 6M13 30l10 5M31 25l6 5" fill="none" stroke="#ced2d5" strokeWidth=".8" />
  </g>,
];

function Dock() {
  return (
    <div className="mx-[41px] flex h-[63px] shrink-0 rounded-t-[4px] bg-[radial-gradient(circle_at_86%_70%,#7b93aa_0%,#5a82a9_10%,transparent_24%),linear-gradient(#466e96,#3d75ae)] pl-1 font-['Inter',sans-serif]">
      <svg className="absolute h-0 w-0">
        <defs>
          <linearGradient id="finder" x2="0" y2="1"><stop stopColor="#10cdfb" /><stop offset="1" stopColor="#1a67ee" /></linearGradient>
          <linearGradient id="siri" x2="0" y2="1"><stop stopColor="#1c1243" /><stop offset=".5" stopColor="#56207b" /><stop offset="1" stopColor="#63baf3" /></linearGradient>
          <linearGradient id="itunes" x2="1" y2="1"><stop stopColor="#fb4566" /><stop offset=".5" stopColor="#b559ee" /><stop offset="1" stopColor="#43c1f7" /></linearGradient>
          <linearGradient id="note" x2="0" y2="1"><stop stopColor="#fb4066" /><stop offset="1" stopColor="#6471ee" /></linearGradient>
          <linearGradient id="msg" x2="0" y2="1"><stop stopColor="#29bffb" /><stop offset="1" stopColor="#1571eb" /></linearGradient>
          <linearGradient id="ffblue" x2="0" y2="1"><stop stopColor="#4fc3ec" /><stop offset=".6" stopColor="#174f98" /><stop offset="1" stopColor="#14285e" /></linearGradient>
          <linearGradient id="fox" x2="1" y2="1"><stop stopColor="#f5831f" /><stop offset=".6" stopColor="#e8481a" /><stop offset="1" stopColor="#d6301a" /></linearGradient>
          <linearGradient id="sky" x2="0" y2="1"><stop stopColor="#2c76cf" /><stop offset="1" stopColor="#a5d0ef" /></linearGradient>
          <linearGradient id="kindle" x2="0" y2="1"><stop stopColor="#182131" /><stop offset=".5" stopColor="#2c63a5" /><stop offset="1" stopColor="#6aa5dd" /></linearGradient>
          <linearGradient id="safari" x2="0" y2="1"><stop stopColor="#22c3fa" /><stop offset="1" stopColor="#1c65e3" /></linearGradient>
        </defs>
      </svg>
      {DOCK.map((d, i) => (
        <svg key={i} viewBox="0 0 51 63" className="h-[63px] w-[51px] shrink-0 overflow-visible">
          {d.art}
          {d.dot && <circle cx="25.500" cy="59" r="2" fill="#0a1030" />}
        </svg>
      ))}
      <i className="mt-2 mr-[11px] ml-3 h-[47px] w-px shrink-0 bg-[#33557b]" />
      {MINIMIZED.map((art, i) => (
        <svg key={i} viewBox="0 0 51 63" className="h-[63px] w-[51px] shrink-0 overflow-visible">{art}</svg>
      ))}
    </div>
  );
}

export default function App() {
  return (
    <div className="flex h-[900px] w-[1440px] flex-col overflow-hidden bg-[linear-gradient(90deg,#103d6b_0%,#0c2744_3%,#09131c_20%,#09131c_90%,#0c2b49_96%,#174a74_100%)] font-['Inter','Roboto',sans-serif]">
      <MenuBar />
      <div className="flex h-[805px] shrink-0 flex-col overflow-hidden rounded-b-[6px] bg-[#fafafa] shadow-[0_2px_2px_#333]">
        <TabStrip />
        <Toolbar />
        <div className="flex h-[716px] shrink-0">
          <Page />
          <div className="w-[15px] border-l border-[#e8e8e8] bg-[#fafafa] pl-[3px]">
            <div className="mt-[115px] h-[393px] w-2 rounded-full bg-[#c1c1c1]" />
          </div>
        </div>
        <div className="flex h-[15px] shrink-0 items-center border-t border-[#dedede] bg-[#f1f1f1] pl-[11px]">
          <div className="h-2 w-[1411px] rounded-full bg-[#b9b9b9]" />
        </div>
      </div>
      <div className="h-[9px] shrink-0" />
      <Dock />
    </div>
  );
}
